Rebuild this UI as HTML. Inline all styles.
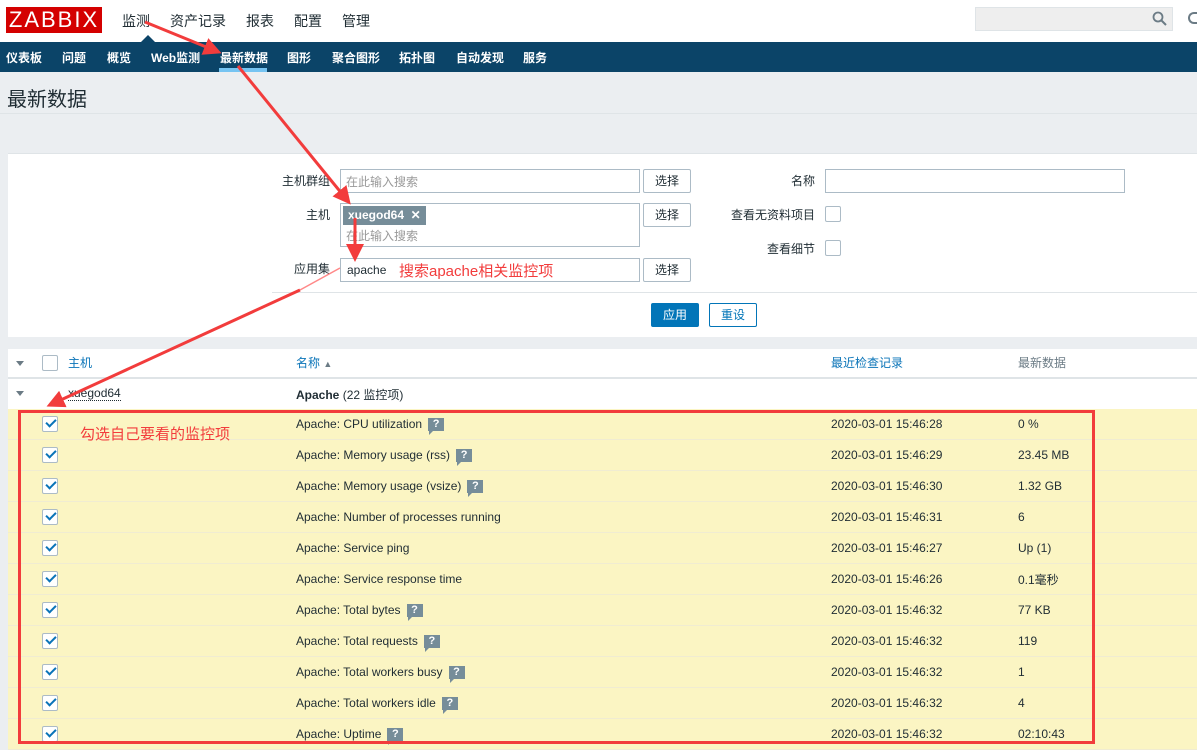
<!DOCTYPE html>
<html><head><meta charset="utf-8"><style>
*{margin:0;padding:0;box-sizing:border-box}
body{width:1197px;height:746px;overflow:hidden;background:#ebeef1;font-family:"Liberation Sans","Noto Sans CJK SC",sans-serif;font-size:12px;color:#1f2c33;position:relative}
.a{position:absolute}
.top{left:0;top:0;width:1197px;height:42px;background:#fff}
.logo{left:6px;top:7px;width:96px;height:26px;background:#d40000;color:#fff;font-size:22px;line-height:26px;text-align:center;letter-spacing:2px}
.mm{top:11px;font-size:14px;color:#1f2c33}
.nav{left:0;top:42px;width:1197px;height:30px;background:#0b4468}
.nv{top:49px;font-size:12px;color:#fff;font-weight:bold}
.panel{background:#fff}
.inp{border:1px solid #acbbc6;background:#fff;height:24px}
.btn{border:1px solid #acbbc6;background:#fff;height:24px;width:48px;text-align:center;line-height:22px;font-size:12px;border-radius:2px}
.lbl{font-size:12px;text-align:right}
.ph{color:#999;font-size:12px}
.cb{width:16px;height:16px;border:1px solid #acbbc6;background:#fff;border-radius:2px}
.row{left:8px;width:1189px;height:31px;background:#fbf5c3;border-bottom:1px solid #f0ecd2}
.cell{font-size:12px;top:8px}
.q{display:inline-block;width:16px;height:13px;background:#768d99;color:#fff;font-size:11px;font-weight:bold;text-align:center;line-height:13px;margin-left:6px;vertical-align:1px;position:relative}
.q:after{content:"";position:absolute;left:1px;bottom:-4px;border-left:4px solid #768d99;border-bottom:4px solid transparent}
.chk{left:34px;top:7px;width:16px;height:16px;border:1px solid #acbbc6;background:#fff;border-radius:2px}
.chk:after{content:"";position:absolute;left:3px;top:2px;width:8px;height:4px;border-left:2px solid #0a74b8;border-bottom:2px solid #0a74b8;transform:rotate(-45deg)}
</style></head><body>
<div class="a top"></div>
<div class="a logo">ZABBIX</div>
<div class="a mm" style="left:122px">监测</div>
<div class="a mm" style="left:170px">资产记录</div>
<div class="a mm" style="left:246px">报表</div>
<div class="a mm" style="left:294px">配置</div>
<div class="a mm" style="left:342px">管理</div>
<div class="a" style="left:141px;top:35px;border-left:7px solid transparent;border-right:7px solid transparent;border-bottom:7px solid #0b4468"></div>
<div class="a" style="left:975px;top:7px;width:198px;height:24px;background:#eee;border:1px solid #dfe4e7"></div>
<svg class="a" style="left:1152px;top:11px" width="16" height="16"><circle cx="6" cy="6" r="4.5" fill="none" stroke="#6b7b85" stroke-width="1.8"/><line x1="9.5" y1="9.5" x2="14" y2="14" stroke="#6b7b85" stroke-width="2"/></svg>
<div class="a" style="left:1188px;top:12px;width:10px;height:12px;border:2px solid #6b7b85;border-radius:6px 0 0 6px;border-right:none"></div>
<div class="a nav"></div>
<div class="a nv" style="left:6px">仪表板</div>
<div class="a nv" style="left:62px">问题</div>
<div class="a nv" style="left:107px">概览</div>
<div class="a nv" style="left:151px">Web监测</div>
<div class="a nv" style="left:220px">最新数据</div>
<div class="a" style="left:219px;top:68px;width:48px;height:4px;background:#76c4f2"></div>
<div class="a nv" style="left:287px">图形</div>
<div class="a nv" style="left:332px">聚合图形</div>
<div class="a nv" style="left:399px">拓扑图</div>
<div class="a nv" style="left:456px">自动发现</div>
<div class="a nv" style="left:523px">服务</div>
<div class="a" style="left:7px;top:83px;font-size:20px;color:#1f2c33">最新数据</div>
<div class="a" style="left:0;top:113px;width:1197px;height:1px;background:#dfe4e7"></div>
<div class="a panel" style="left:8px;top:153px;width:1189px;height:184px;border-top:1px solid #dfe4e7"></div>
<div class="a lbl" style="left:270px;top:172px;width:60px">主机群组</div>
<div class="a inp" style="left:340px;top:169px;width:300px"><span class="a ph" style="left:5px;top:3px">在此输入搜索</span></div>
<div class="a btn" style="left:643px;top:169px">选择</div>
<div class="a lbl" style="left:270px;top:206px;width:60px">主机</div>
<div class="a inp" style="left:340px;top:203px;width:300px;height:44px"><span class="a" style="left:2px;top:2px;background:#768d99;color:#fff;font-weight:bold;padding:2px 5px;height:19px;font-size:12px">xuegod64 &nbsp;✕</span><span class="a ph" style="left:5px;top:23px">在此输入搜索</span></div>
<div class="a btn" style="left:643px;top:203px">选择</div>
<div class="a lbl" style="left:270px;top:260px;width:60px">应用集</div>
<div class="a inp" style="left:340px;top:258px;width:300px"><span class="a" style="left:6px;top:4px">apache</span><span class="a" style="left:58px;top:1px;color:#f23c3c;font-size:15px">搜索apache相关监控项</span></div>
<div class="a btn" style="left:643px;top:258px">选择</div>
<div class="a lbl" style="left:700px;top:172px;width:115px">名称</div>
<div class="a inp" style="left:825px;top:169px;width:300px"></div>
<div class="a lbl" style="left:700px;top:206px;width:115px">查看无资料项目</div>
<div class="a cb" style="left:825px;top:206px"></div>
<div class="a lbl" style="left:700px;top:240px;width:115px">查看细节</div>
<div class="a cb" style="left:825px;top:240px"></div>
<div class="a" style="left:272px;top:292px;width:925px;height:1px;background:#dfe4e7"></div>
<div class="a btn" style="left:651px;top:303px;background:#0275b8;border-color:#0275b8;color:#fff">应用</div>
<div class="a btn" style="left:709px;top:303px;border-color:#0275b8;color:#0275b8">重设</div>
<div class="a panel" style="left:8px;top:349px;width:1189px;height:60px"></div>
<div class="a" style="left:8px;top:377px;width:1189px;height:2px;background:#dfe4e7"></div>
<div class="a" style="left:16px;top:361px;border-left:4px solid transparent;border-right:4px solid transparent;border-top:5px solid #6b7b85"></div>
<div class="a cb" style="left:42px;top:355px"></div>
<div class="a" style="left:68px;top:354px;color:#0a74b8">主机</div>
<div class="a" style="left:296px;top:354px;color:#0a74b8">名称 <span style="color:#6b7b85;font-size:9px">▲</span></div>
<div class="a" style="left:831px;top:354px;color:#0a74b8">最近检查记录</div>
<div class="a" style="left:1018px;top:354px;color:#6b7b85">最新数据</div>
<div class="a" style="left:16px;top:391px;border-left:4px solid transparent;border-right:4px solid transparent;border-top:5px solid #6b7b85"></div>
<div class="a" style="left:68px;top:386px;border-bottom:1px dotted #1f2c33">xuegod64</div>
<div class="a" style="left:296px;top:386px"><b>Apache</b> (22 监控项)</div>

<div class="a row" style="top:409px"><div class="a chk"></div><div class="a cell" style="left:288px">Apache: CPU utilization<span class="q">?</span></div><div class="a cell" style="left:823px">2020-03-01 15:46:28</div><div class="a cell" style="left:1010px">0 %</div></div>
<div class="a row" style="top:440px"><div class="a chk"></div><div class="a cell" style="left:288px">Apache: Memory usage (rss)<span class="q">?</span></div><div class="a cell" style="left:823px">2020-03-01 15:46:29</div><div class="a cell" style="left:1010px">23.45 MB</div></div>
<div class="a row" style="top:471px"><div class="a chk"></div><div class="a cell" style="left:288px">Apache: Memory usage (vsize)<span class="q">?</span></div><div class="a cell" style="left:823px">2020-03-01 15:46:30</div><div class="a cell" style="left:1010px">1.32 GB</div></div>
<div class="a row" style="top:502px"><div class="a chk"></div><div class="a cell" style="left:288px">Apache: Number of processes running</div><div class="a cell" style="left:823px">2020-03-01 15:46:31</div><div class="a cell" style="left:1010px">6</div></div>
<div class="a row" style="top:533px"><div class="a chk"></div><div class="a cell" style="left:288px">Apache: Service ping</div><div class="a cell" style="left:823px">2020-03-01 15:46:27</div><div class="a cell" style="left:1010px">Up (1)</div></div>
<div class="a row" style="top:564px"><div class="a chk"></div><div class="a cell" style="left:288px">Apache: Service response time</div><div class="a cell" style="left:823px">2020-03-01 15:46:26</div><div class="a cell" style="left:1010px;top:7px">0.1毫秒</div></div>
<div class="a row" style="top:595px"><div class="a chk"></div><div class="a cell" style="left:288px">Apache: Total bytes<span class="q">?</span></div><div class="a cell" style="left:823px">2020-03-01 15:46:32</div><div class="a cell" style="left:1010px">77 KB</div></div>
<div class="a row" style="top:626px"><div class="a chk"></div><div class="a cell" style="left:288px">Apache: Total requests<span class="q">?</span></div><div class="a cell" style="left:823px">2020-03-01 15:46:32</div><div class="a cell" style="left:1010px">119</div></div>
<div class="a row" style="top:657px"><div class="a chk"></div><div class="a cell" style="left:288px">Apache: Total workers busy<span class="q">?</span></div><div class="a cell" style="left:823px">2020-03-01 15:46:32</div><div class="a cell" style="left:1010px">1</div></div>
<div class="a row" style="top:688px"><div class="a chk"></div><div class="a cell" style="left:288px">Apache: Total workers idle<span class="q">?</span></div><div class="a cell" style="left:823px">2020-03-01 15:46:32</div><div class="a cell" style="left:1010px">4</div></div>
<div class="a row" style="top:719px"><div class="a chk"></div><div class="a cell" style="left:288px">Apache: Uptime<span class="q">?</span></div><div class="a cell" style="left:823px">2020-03-01 15:46:32</div><div class="a cell" style="left:1010px">02:10:43</div></div>

<div class="a" style="left:18px;top:410px;width:1077px;height:334px;border:3px solid #f23c3c"></div>
<div class="a" style="left:80px;top:423px;color:#f23c3c;font-size:15px">勾选自己要看的监控项</div>

<svg class="a" style="left:0;top:0" width="1197" height="746">
<defs><marker id="h" markerWidth="6" markerHeight="6" refX="4" refY="3" orient="auto" markerUnits="strokeWidth"><path d="M0,0 L6,3 L0,6 Z" fill="#f23c3c"/></marker></defs>
<g stroke="#f23c3c" stroke-width="3" fill="none">
<line x1="145" y1="22" x2="216" y2="51" marker-end="url(#h)"/>
<line x1="238" y1="66" x2="347" y2="200" marker-end="url(#h)"/>
<line x1="355" y1="218" x2="355" y2="256" marker-end="url(#h)"/>
<line x1="300" y1="290" x2="52" y2="404" marker-end="url(#h)"/>
</g>
<line x1="340" y1="268" x2="300" y2="290" stroke="#f88" stroke-width="1.5"/>
</svg>
</body></html>
